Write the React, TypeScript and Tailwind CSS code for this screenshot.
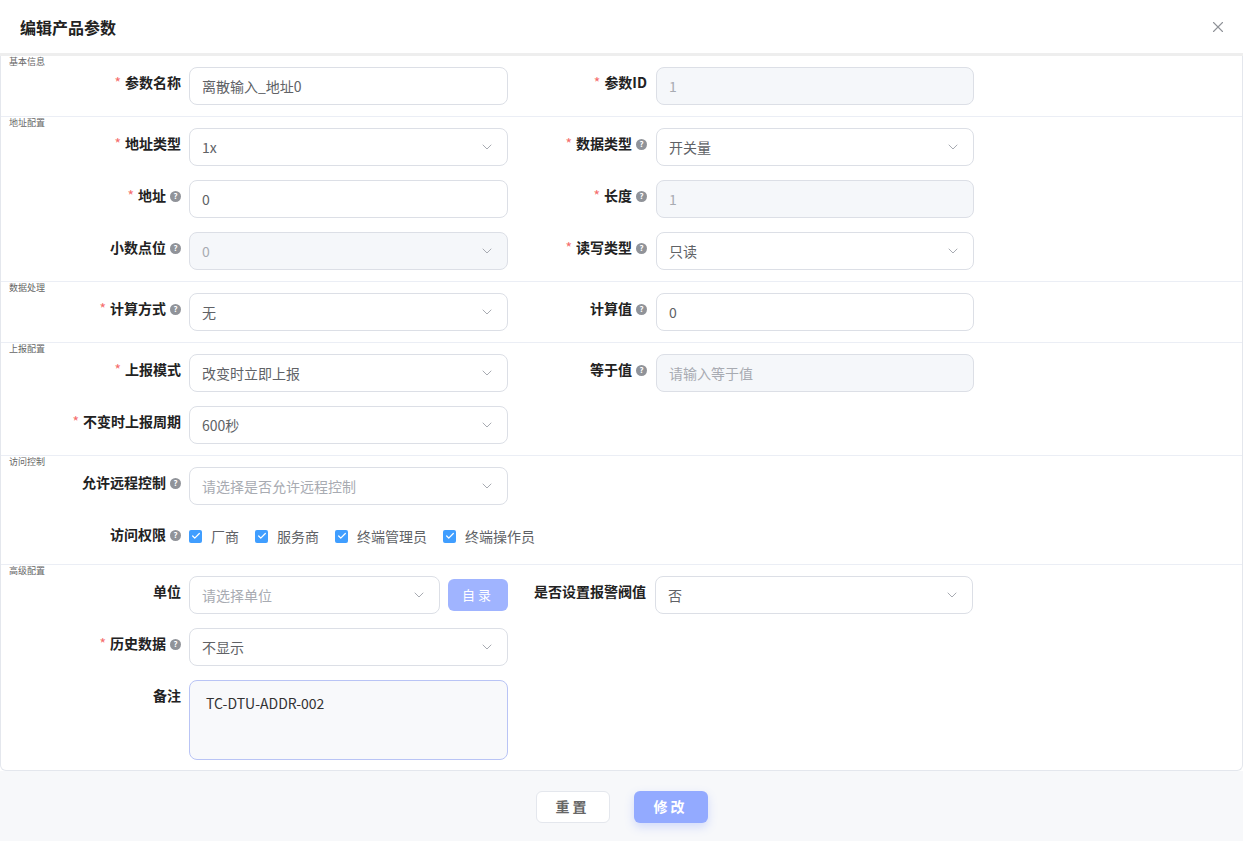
import { X, ChevronDown, Check } from "lucide-react";

const font = { fontFamily: '"Noto Sans CJK SC", "Liberation Sans", sans-serif' };

function Help() {
  return (
    <span className="ml-1 inline-flex h-[11px] w-[11px] items-center justify-center rounded-full bg-[#909399] text-[8px] font-bold leading-none text-white">
      ?
    </span>
  );
}

function Label({ text, req, help, w }: { text: string; req?: boolean; help?: boolean; w: string }) {
  return (
    <div className={`${w} flex shrink-0 items-start justify-end pt-[5px] text-[14px] font-bold leading-[20px] text-[#222]`}>
      {req && <span className="mr-1 text-[#f56c6c] font-normal">*</span>}
      <span>{text}</span>
      {help && <span className="mt-[-2px]"><Help /></span>}
    </div>
  );
}

function Field({ value, placeholder, select, disabled, w = "w-[319px]" }: { value?: string; placeholder?: string; select?: boolean; disabled?: boolean; w?: string }) {
  return (
    <div
      className={`${w} flex h-[38px] shrink-0 items-center justify-between rounded-lg border border-[#dcdfe6] px-3 text-[14px] ${
        disabled ? "bg-[#f5f7fa] text-[#a8abb2]" : "bg-white text-[#606266]"
      }`}
    >
      <span className={value ? "" : "text-[#a8abb2]"}>{value || placeholder}</span>
      {select && <ChevronDown className="h-4 w-4 text-[#a8abb2]" strokeWidth={1.5} />}
    </div>
  );
}

function Section({ title, children, last }: { title: string; children: React.ReactNode; last?: boolean }) {
  return (
    <div className={`${last ? "" : "border-b border-[#ebeef5]"} pt-[1px] pb-[11px]`}>
      <div className="h-[10px] pl-2 text-[9px] leading-[10px] text-[#666]">{title}</div>
      <div className="flex flex-col gap-[14px]">{children}</div>
    </div>
  );
}

function Row({ children }: { children: React.ReactNode }) {
  return <div className="flex items-start gap-2">{children}</div>;
}

function Right({ children }: { children: React.ReactNode }) {
  return <div className="flex items-start gap-[9px]">{children}</div>;
}

function Box({ label }: { label: string }) {
  return (
    <span className="mr-4 flex items-center gap-[9px] text-[14px] text-[#606266]">
      <span className="flex h-[13px] w-[13px] items-center justify-center rounded-[2px] bg-[#409eff]">
        <Check className="h-[10px] w-[10px] text-white" strokeWidth={3} />
      </span>
      {label}
    </span>
  );
}

export default function App() {
  return (
    <div className="flex h-[841px] w-[1243px] flex-col bg-white" style={font}>
      <div className="flex h-[56px] shrink-0 items-center justify-between border-b-[3px] border-[#eeeeee] pl-5 pr-4">
        <span className="text-[16px] font-bold text-[#222]">编辑产品参数</span>
        <X className="h-[18px] w-[18px] text-[#909399]" strokeWidth={1.5} />
      </div>
      <div className="flex-1 rounded-b-md border-x border-b border-[#e4e7ed]">
        <Section title="基本信息">
          <Row>
            <Label w="w-[180px]" text="参数名称" req />
            <Field value="离散输入_地址0" />
            <Right>
              <Label w="w-[131px]" text="参数ID" req />
              <Field value="1" disabled w="w-[318px]" />
            </Right>
          </Row>
        </Section>
        <Section title="地址配置">
          <Row>
            <Label w="w-[180px]" text="地址类型" req />
            <Field value="1x" select />
            <Right>
              <Label w="w-[131px]" text="数据类型" req help />
              <Field value="开关量" select w="w-[318px]" />
            </Right>
          </Row>
          <Row>
            <Label w="w-[180px]" text="地址" req help />
            <Field value="0" />
            <Right>
              <Label w="w-[131px]" text="长度" req help />
              <Field value="1" disabled w="w-[318px]" />
            </Right>
          </Row>
          <Row>
            <Label w="w-[180px]" text="小数点位" help />
            <Field value="0" select disabled />
            <Right>
              <Label w="w-[131px]" text="读写类型" req help />
              <Field value="只读" select w="w-[318px]" />
            </Right>
          </Row>
        </Section>
        <Section title="数据处理">
          <Row>
            <Label w="w-[180px]" text="计算方式" req help />
            <Field value="无" select />
            <Right>
              <Label w="w-[131px]" text="计算值" help />
              <Field value="0" w="w-[318px]" />
            </Right>
          </Row>
        </Section>
        <Section title="上报配置">
          <Row>
            <Label w="w-[180px]" text="上报模式" req />
            <Field value="改变时立即上报" select />
            <Right>
              <Label w="w-[131px]" text="等于值" help />
              <Field placeholder="请输入等于值" disabled w="w-[318px]" />
            </Right>
          </Row>
          <Row>
            <Label w="w-[180px]" text="不变时上报周期" req />
            <Field value="600秒" select />
          </Row>
        </Section>
        <Section title="访问控制">
          <Row>
            <Label w="w-[180px]" text="允许远程控制" help />
            <Field placeholder="请选择是否允许远程控制" select />
          </Row>
          <Row>
            <Label w="w-[180px]" text="访问权限" help />
            <div className="flex h-[34px] items-center">
              <Box label="厂商" />
              <Box label="服务商" />
              <Box label="终端管理员" />
              <Box label="终端操作员" />
            </div>
          </Row>
        </Section>
        <div className="pt-[1px] pb-[10px]">
          <div className="h-[10px] pl-2 text-[9px] leading-[10px] text-[#666]">高级配置</div>
          <div className="flex flex-col gap-[14px]">
            <Row>
              <Label w="w-[180px]" text="单位" />
              <Field placeholder="请选择单位" select w="w-[251px]" />
              <div className="mt-[3px] flex h-[32px] w-[60px] items-center justify-center rounded-md bg-[#a0b4ff] text-[13px] tracking-[3px] text-white">
                自录
              </div>
              <Right>
                <Label w="w-[130px]" text="是否设置报警阀值" />
                <Field value="否" select w="w-[318px]" />
              </Right>
            </Row>
            <Row>
              <Label w="w-[180px]" text="历史数据" req help />
              <Field value="不显示" select />
            </Row>
            <Row>
              <Label w="w-[180px]" text="备注" />
              <div className="h-[80px] w-[319px] rounded-lg border border-[#b9c4f5] bg-[#f8f9fb] px-4 pt-[12px] text-[14px] text-[#333]">
                TC-DTU-ADDR-002
              </div>
            </Row>
          </div>
        </div>
      </div>
      <div className="flex h-[71px] shrink-0 items-center justify-center gap-6 bg-[#f7f8fa]">
        <div className="flex h-[32px] w-[74px] items-center justify-center rounded-md border border-[#e4e7ed] bg-white text-[14px] font-bold tracking-[3px] text-[#666]">
          重置
        </div>
        <div className="flex h-[32px] w-[74px] items-center justify-center rounded-md bg-[#93aaff] text-[14px] font-bold tracking-[3px] text-white shadow-[0_4px_10px_rgba(100,130,255,0.25)]">
          修改
        </div>
      </div>
    </div>
  );
}
